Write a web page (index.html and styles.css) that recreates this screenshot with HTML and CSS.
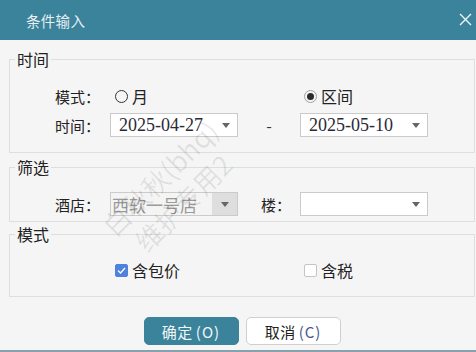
FILE: index.html
```html
<!DOCTYPE html>
<html lang="zh-CN">
<head>
  <meta charset="UTF-8" />
  <meta name="viewport" content="width=device-width, initial-scale=1.0"/>
  <title>条件输入</title>
  <link rel="stylesheet" href="styles.css">
</head>
<body>

  <div class="dialog">
    <div class="titlebar">
      <span class="title">条件输入</span>
      <svg class="close" width="13" height="13" viewBox="0 0 13 13">
        <path d="M1 1 L12 12 M12 1 L1 12" stroke="#f2f6f8" stroke-width="1.4" fill="none"/>
      </svg>
    </div>

    <div class="content">
      <fieldset class="group g-time">
        <legend>时间</legend>
        <div class="row">
          <span class="label">模式：</span>
          <span class="option"><i class="radio"></i>月</span>
          <span></span>
          <span class="option"><i class="radio on"></i>区间</span>
        </div>
        <div class="row">
          <span class="label">时间：</span>
          <div class="combo"><span class="date">2025-04-27</span><i class="arrow"></i></div>
          <span class="dash">-</span>
          <div class="combo"><span class="date">2025-05-10</span><i class="arrow"></i></div>
        </div>
      </fieldset>

      <fieldset class="group g-filter">
        <legend>筛选</legend>
        <div class="row">
          <span class="label">酒店：</span>
          <div class="combo disabled"><span class="text">西软一号店</span><span class="btn"><i class="arrow"></i></span></div>
          <span class="label mid">楼：</span>
          <div class="combo"><span class="text"></span><i class="arrow"></i></div>
        </div>
      </fieldset>

      <fieldset class="group g-mode">
        <legend>模式</legend>
        <div class="row">
          <span></span>
          <span class="option">
            <i class="check on"><svg width="9" height="7" viewBox="0 0 9 7"><path d="M1 3.5 L3.5 6 L8 1" stroke="#fff" stroke-width="1.3" fill="none"/></svg></i>含包价
          </span>
          <span></span>
          <span class="option"><i class="check"></i>含税</span>
        </div>
      </fieldset>

      <div class="actions">
        <button class="primary">确定<span class="key">(O)</span></button>
        <button class="plain">取消<span class="key">(C)</span></button>
      </div>
    </div>

    <div class="watermark">白秋秋(bhq)<br><span class="wm2">维护专用2</span></div>
  </div>

</body>
</html>
```

FILE: styles.css
```css
* { box-sizing: border-box; }
body {
  margin: 0;
  font-family: "Noto Sans CJK SC", "Noto Sans", sans-serif;
  background: #f5f5f5;
  color: #222;
}

.dialog {
  position: relative;
  width: 476px;
  height: 352px;
  background: #f5f5f5;
  border-bottom: 2px solid #86a3ad;
  overflow: hidden;
}

.titlebar {
  height: 40px;
  background: #3a839a;
  display: flex;
  align-items: center;
  padding: 0 4px 0 26px;
}

.title {
  font-size: 14.5px;
  color: #e8f0f3;
  letter-spacing: 0.3px;
}

.close { margin-left: auto; margin-top: -2px; }

.content {
  padding: 9px 1px 0 9px;
}

.group {
  margin: 0;
  border: 1px solid #dedede;
  padding: 0 0 0 5px;
  min-width: 0;
}

.group legend {
  padding: 0 2px;
  font-size: 16px;
  line-height: 20px;
  color: #222;
}

.g-time { padding-top: 15px; padding-bottom: 15px; }
.g-filter { margin-top: 4px; padding-top: 15px; padding-bottom: 5px; }
.g-mode { margin-top: 2px; padding-top: 14px; padding-bottom: 14px; }

.row {
  display: grid;
  grid-template-columns: 55px 128px 62px 128px;
  align-items: center;
  height: 24px;
  margin-left: 40px;
}
.row + .row { margin-top: 5px; }

.label { font-size: 15px; }
.label.mid { padding-left: 23px; }

.option {
  display: flex;
  align-items: center;
  gap: 4px;
  padding-left: 5px;
  font-size: 16px;
}
.row .option:last-child { padding-left: 4px; }

.radio {
  width: 13px;
  height: 13px;
  border: 1px solid #333;
  border-radius: 50%;
  display: flex;
  align-items: center;
  justify-content: center;
}
.radio.on { border-color: #a0a0a0; }
.radio.on::after {
  content: "";
  width: 7px;
  height: 7px;
  border-radius: 50%;
  background: #2b2b2b;
}

.check {
  width: 13px;
  height: 13px;
  border: 1px solid #c4c4c4;
  border-radius: 2px;
  background: #fff;
  display: flex;
  align-items: center;
  justify-content: center;
}
.check.on { background: #4d82df; border-color: #4d82df; }

.combo {
  height: 24px;
  border: 1px solid #cbcbcb;
  background: #fff;
  display: flex;
  align-items: center;
  padding-left: 8px;
}

.date {
  font-family: "Liberation Serif", serif;
  font-size: 18px;
  color: #2a2a36;
}

.arrow {
  margin-left: auto;
  margin-right: 7px;
  width: 0;
  height: 0;
  border-left: 4.5px solid transparent;
  border-right: 4.5px solid transparent;
  border-top: 5px solid #666;
}

.combo.disabled {
  background: #f4f4f4;
  padding-left: 1px;
}
.combo.disabled .text { font-size: 17px; color: #9a9a9a; }
.combo.disabled .btn {
  margin-left: auto;
  width: 25px;
  height: 100%;
  background: #dedede;
  display: flex;
  align-items: center;
  justify-content: center;
}
.combo.disabled .btn .arrow { margin: 0; }

.dash { text-align: center; font-size: 16px; color: #333; }

.actions {
  display: flex;
  justify-content: center;
  gap: 7px;
  margin-top: 20px;
}

button {
  width: 95px;
  height: 28px;
  border-radius: 5px;
  font-family: "Noto Sans CJK SC", "Noto Sans", sans-serif;
  font-size: 15px;
  letter-spacing: 0.5px;
  padding: 0;
  cursor: pointer;
}

button .key {
  margin-left: 3px;
  letter-spacing: 1px;
}

.primary {
  background: #3a839a;
  border: 1px solid #3a839a;
  color: #f2f7f9;
}

.plain {
  background: #fff;
  border: 1px solid #cfcfcf;
  color: #222;
}
.plain .key { color: #4a5690; }

.watermark {
  position: absolute;
  left: 172px;
  top: 190px;
  transform: translate(-50%, -50%) rotate(-45deg);
  font-size: 27px;
  line-height: 34px;
  white-space: nowrap;
  color: rgba(0, 0, 0, 0.09);
  pointer-events: none;
}
.wm2 { padding-left: 12px; }
```
